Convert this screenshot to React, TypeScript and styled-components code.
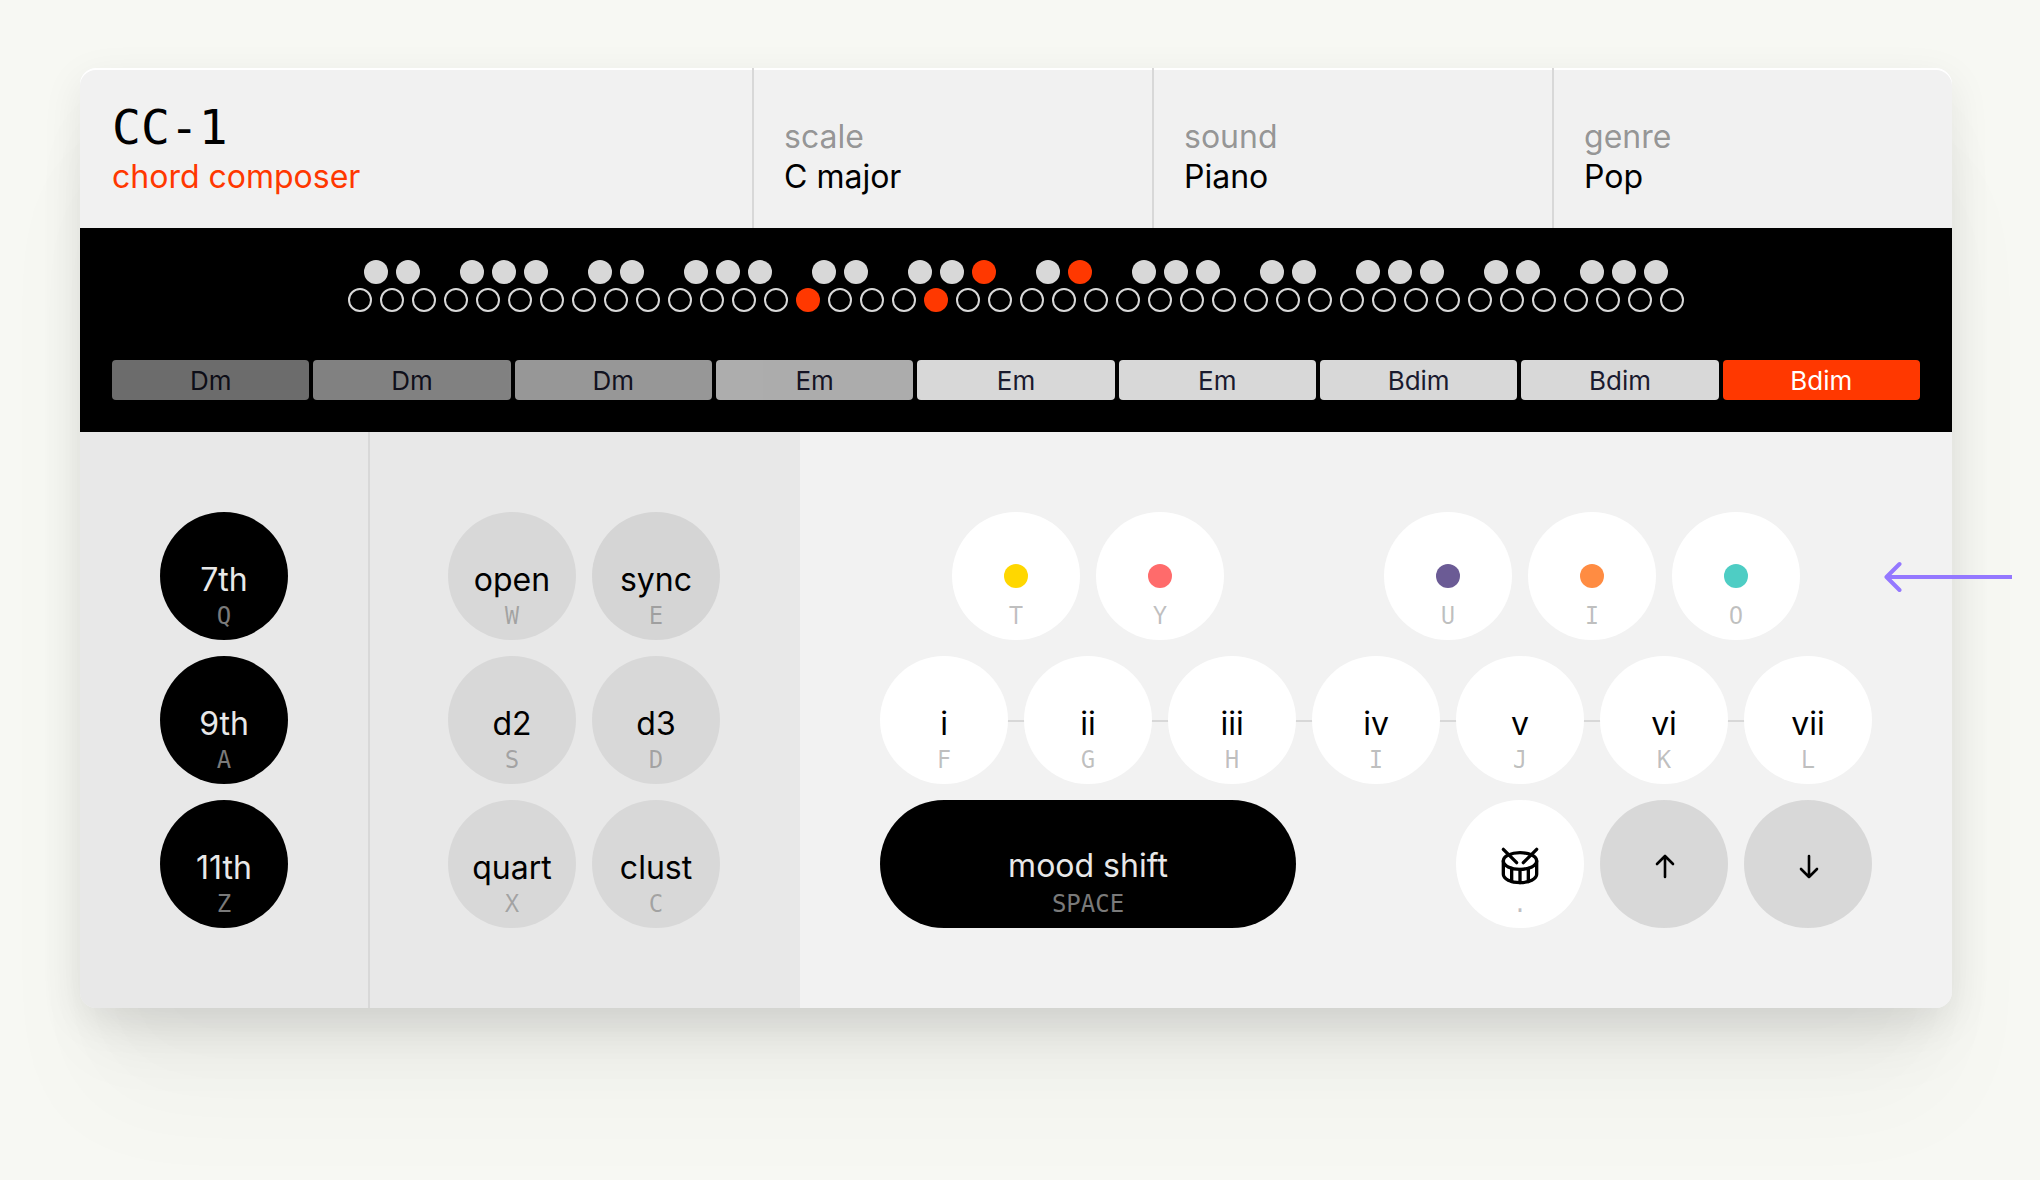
import React from "react";
import styled, { createGlobalStyle } from "styled-components";
import { Drum } from "lucide-react";

const sans = `Inter, "Liberation Sans", sans-serif`;
const mono = `"DejaVu Sans Mono", "Liberation Mono", monospace`;
const accent = "#ff3800";

const GlobalStyle = createGlobalStyle`
  *, *::before, *::after { box-sizing: border-box; }
  body {
    margin: 0;
    background: #f7f8f3;
    color: #000;
    font-family: ${sans};
    font-size: 32px;
    line-height: 40px;
    -webkit-font-smoothing: antialiased;
  }
  button, select { font: inherit; color: inherit; }
`;

const Page = styled.main`
  min-height: 100vh;
  padding: 68px 88px 0 80px;
  overflow: hidden;
`;

const Device = styled.section`
  position: relative;
  border-radius: 16px;
  background: #f1f1f1;
  box-shadow:
    0 12px 40px rgba(0, 0, 0, 0.08),
    0 48px 64px -20px rgba(0, 0, 0, 0.08),
    0 100px 120px -10px rgba(0, 0, 0, 0.03);
`;

const Header = styled.header`
  display: grid;
  grid-template-columns: 42fr 25fr 25fr 25fr;
  height: 160px;
  border-radius: 16px 16px 0 0;
  box-shadow: inset 0 2px 0 #fff;
`;

const Brand = styled.div`
  display: flex;
  flex-direction: column;
  justify-content: flex-end;
  gap: 6px;
  padding: 0 32px 31px;
`;

const Title = styled.h1`
  margin: 0;
  font: 400 48px/48px ${mono};
`;

const Subtitle = styled.p`
  margin: 0;
  color: ${accent};
`;

const Setting = styled.label`
  display: flex;
  flex-direction: column;
  justify-content: flex-end;
  padding: 0 30px 31px;
  border-left: 2px solid #d8d8d8;
  color: rgba(0, 0, 0, 0.4);
`;

const SettingSelect = styled.select`
  appearance: none;
  height: 40px;
  padding: 0;
  border: 0;
  background: none;
  color: #000;
  cursor: pointer;
`;

const Display = styled.div`
  padding: 32px;
  background: #000;
`;

const NoteRow = styled.div<{ $count: number }>`
  display: grid;
  grid-template-columns: repeat(${(p) => p.$count}, 24px);
  justify-content: center;
  gap: 8px;
  & + & { margin-top: 4px; }
`;

const Note = styled.span<{ $kind: "sharp" | "natural" | "gap"; $on: boolean }>`
  height: 24px;
  border-radius: 50%;
  border: ${(p) => (p.$kind === "natural" && !p.$on ? "2px solid #d8d8d8" : "0")};
  background: ${(p) => (p.$on ? accent : p.$kind === "sharp" ? "#d8d8d8" : "transparent")};
`;

const ChordList = styled.ol`
  display: grid;
  grid-template-columns: repeat(9, 1fr);
  gap: 4px;
  margin: 48px 0 0;
  padding: 0;
  list-style: none;
`;

const Chord = styled.li<{ $level: number; $active: boolean }>`
  padding-top: 2px;
  border-radius: 4px;
  background: ${(p) => (p.$active ? accent : "#d8d8d8")};
  color: ${(p) => (p.$active ? "#fff" : "#1a1a2e")};
  opacity: ${(p) => p.$level};
  font-size: 26px;
  line-height: 38px;
  text-align: center;
`;

const Keyboard = styled.div`
  display: grid;
  grid-template-columns: 2fr 3fr 8fr;
`;

const Zone = styled.div<{ $shade?: boolean; $divided?: boolean; $columns: string }>`
  display: grid;
  grid-template-columns: ${(p) => p.$columns};
  grid-auto-rows: 128px;
  gap: 16px;
  justify-content: center;
  padding: 80px 0;
  background: ${(p) => (p.$shade ? "#e8e8e8" : "#f2f2f2")};
  box-shadow: ${(p) => (p.$divided ? "inset 2px 0 0 #d8d8d8" : "none")};
  &:first-child { border-bottom-left-radius: 16px; }
  &:last-child { border-bottom-right-radius: 16px; }
`;

const Wire = styled.span`
  grid-area: 2 / 1 / 3 / 15;
  align-self: center;
  height: 2px;
  margin: 2px 64px 0;
  background: #d8d8d8;
`;

type Tone = "black" | "grey" | "white";

const tones: Record<Tone, { bg: string; text: string; hint: string }> = {
  black: { bg: "#000", text: "#e8e8e8", hint: "#7a7a7a" },
  grey: { bg: "#d8d8d8", text: "#000", hint: "rgba(0, 0, 0, 0.25)" },
  white: { bg: "#fff", text: "#000", hint: "rgba(0, 0, 0, 0.25)" },
};

const KeyButton = styled.button<{ $tone: Tone; $area?: string; $hover?: boolean; $wide?: boolean }>`
  display: flex;
  flex-direction: column;
  align-items: center;
  gap: ${(p) => (p.$wide ? "6px" : "4px")};
  grid-area: ${(p) => p.$area ?? "auto"};
  padding: ${(p) => (p.$wide ? "46px" : "48px")} 0 0;
  border: 0;
  border-radius: 64px;
  background: ${(p) => (p.$hover ? "#d5d5d5" : tones[p.$tone].bg)};
  color: ${(p) => tones[p.$tone].text};
  cursor: pointer;
`;

const Face = styled.span`
  display: flex;
  align-items: center;
  justify-content: center;
  height: 40px;
`;

const Hint = styled.kbd<{ $tone: Tone }>`
  font: 400 24px/24px ${mono};
  color: ${(p) => tones[p.$tone].hint};
`;

const ColorDot = styled.span<{ $color: string }>`
  width: 24px;
  height: 24px;
  margin-bottom: 8px;
  border-radius: 50%;
  background: ${(p) => p.$color};
`;

const DrumIcon = styled(Drum)`
  margin-bottom: 4px;
`;

const ArrowIcon = styled.svg`
  margin-bottom: 4px;
`;

const Pointer = styled.svg`
  position: absolute;
  top: 492px;
  right: -60px;
  width: 128px;
  height: 34px;
`;

const sharps = Array.from({ length: 41 }, (_, i) => i);
const naturals = Array.from({ length: 42 }, (_, i) => i);
const activeSharps = [19, 22];
const activeNaturals = [14, 18];
const isSharp = (i: number) => ![2, 6].includes(i % 7);

const chords: [string, number][] = [
  ["Dm", 0.5], ["Dm", 0.6], ["Dm", 0.7], ["Em", 0.8], ["Em", 1],
  ["Em", 1], ["Bdim", 1], ["Bdim", 1], ["Bdim", 1],
];

const settings: [string, string][] = [
  ["scale", "C major"], ["sound", "Piano"], ["genre", "Pop"],
];

const extensions = [["7th", "Q"], ["9th", "A"], ["11th", "Z"]];
const voicings = [
  ["open", "W"], ["sync", "E"], ["d2", "S"], ["d3", "D"], ["quart", "X"], ["clust", "C"],
];
const moods: [string, string, string, number][] = [
  ["Yellow", "#ffd700", "T", 2], ["Coral", "#ff6b6b", "Y", 4], ["Purple", "#6b5b95", "U", 8],
  ["Orange", "#ff8c42", "I", 10], ["Teal", "#4ecdc4", "O", 12],
];
const degrees = [
  ["i", "F"], ["ii", "G"], ["iii", "H"], ["iv", "I"], ["v", "J"], ["vi", "K"], ["vii", "L"],
];

type KeyProps = {
  tone: Tone;
  hint?: string;
  area?: string;
  hover?: boolean;
  wide?: boolean;
  label?: string;
  children: React.ReactNode;
};

function Key({ tone, hint, area, hover, wide, label, children }: KeyProps) {
  return (
    <KeyButton type="button" $tone={tone} $area={area} $hover={hover} $wide={wide} aria-label={label}>
      <Face>{children}</Face>
      {hint && <Hint $tone={tone}>{hint}</Hint>}
    </KeyButton>
  );
}

function Arrow({ down }: { down?: boolean }) {
  return (
    <ArrowIcon width="26" height="32" viewBox="0 0 26 32" fill="none" stroke="#000" strokeWidth="2.6" strokeLinecap="round" strokeLinejoin="round" aria-hidden="true">
      <path d={down ? "M14 6v21M6 19l8 8 8-8" : "M14 27V6M6 14l8-8 8 8"} />
    </ArrowIcon>
  );
}

export default function App() {
  return (
    <>
      <GlobalStyle />
      <Page>
        <Device>
          <Header>
            <Brand>
              <Title>CC-1</Title>
              <Subtitle>chord composer</Subtitle>
            </Brand>
            {settings.map(([name, value]) => (
              <Setting key={name}>
                {name}
                <SettingSelect defaultValue={value}>
                  <option>{value}</option>
                </SettingSelect>
              </Setting>
            ))}
          </Header>

          <Display>
            <NoteRow $count={sharps.length}>
              {sharps.map((i) => (
                <Note key={i} $kind={isSharp(i) ? "sharp" : "gap"} $on={activeSharps.includes(i)} />
              ))}
            </NoteRow>
            <NoteRow $count={naturals.length}>
              {naturals.map((i) => (
                <Note key={i} $kind="natural" $on={activeNaturals.includes(i)} />
              ))}
            </NoteRow>
            <ChordList>
              {chords.map(([name, level], i) => (
                <Chord key={i} $level={level} $active={i === chords.length - 1}>{name}</Chord>
              ))}
            </ChordList>
          </Display>

          <Keyboard>
            <Zone $shade $columns="128px">
              {extensions.map(([name, hint]) => (
                <Key key={name} tone="black" hint={hint}>{name}</Key>
              ))}
            </Zone>
            <Zone $shade $divided $columns="128px 128px">
              {voicings.map(([name, hint]) => (
                <Key key={name} tone="grey" hint={hint} hover={name === "sync"}>{name}</Key>
              ))}
            </Zone>
            <Zone $columns="repeat(14, 56px)">
              <Wire />
              {moods.map(([name, color, hint, column]) => (
                <Key key={name} tone="white" hint={hint} area={`1 / ${column} / 2 / ${column + 2}`} label={name}>
                  <ColorDot $color={color} />
                </Key>
              ))}
              {degrees.map(([name, hint], i) => (
                <Key key={name} tone="white" hint={hint} area={`2 / ${i * 2 + 1} / 3 / ${i * 2 + 3}`}>{name}</Key>
              ))}
              <Key tone="black" hint="SPACE" area="3 / 1 / 4 / 7" wide>mood shift</Key>
              <Key tone="white" hint="." area="3 / 9 / 4 / 11" label="Drums">
                <DrumIcon size={40} strokeWidth={2} />
              </Key>
              <Key tone="grey" area="3 / 11 / 4 / 13" label="Octave up"><Arrow /></Key>
              <Key tone="grey" area="3 / 13 / 4 / 15" label="Octave down"><Arrow down /></Key>
            </Zone>
          </Keyboard>

          <Pointer viewBox="0 0 128 34" fill="none" stroke="#9478ff" strokeWidth="4" strokeLinejoin="round" aria-hidden="true">
            <path d="M3 17H128" />
            <path d="M15.500 4L2.500 17L15.500 30" strokeLinecap="round" />
          </Pointer>
        </Device>
      </Page>
    </>
  );
}
